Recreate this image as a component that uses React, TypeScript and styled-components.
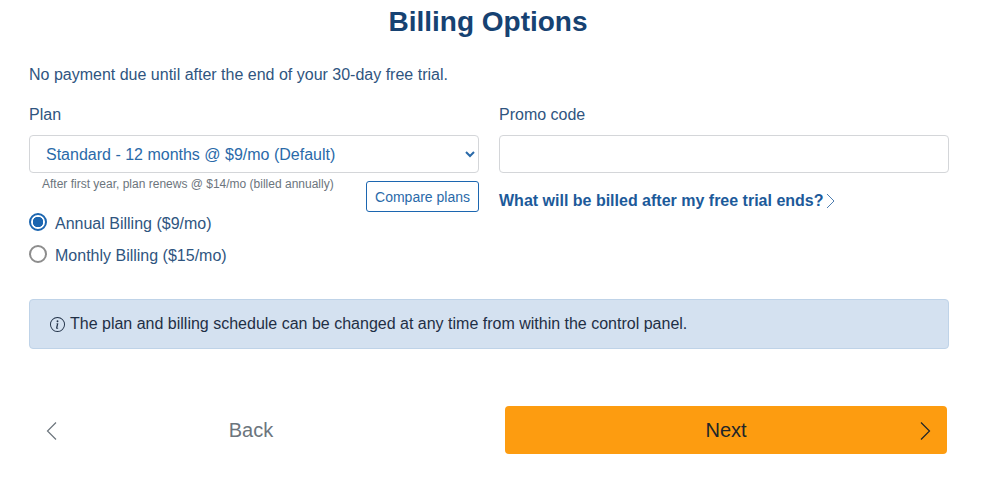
import React from 'react';
import styled, { createGlobalStyle } from 'styled-components';

const GlobalStyle = createGlobalStyle`
  html, body {
    margin: 0;
    padding: 0;
    background: #fff;
    font-family: "Liberation Sans", Arial, sans-serif;
  }
  * { box-sizing: border-box; }
`;

const Page = styled.div`
  width: 990px;
  height: 481px;
  padding: 0 41px 0 29px;
  overflow: hidden;
`;

const Title = styled.h1`
  margin: 0;
  padding: 5px 2px 0 0;
  height: 58px;
  font-size: 28px;
  line-height: 33px;
  font-weight: 700;
  text-align: center;
  color: #164272;
`;

const Intro = styled.p`
  margin: 0;
  height: 34px;
  padding-top: 7px;
  font-size: 16px;
  line-height: 20px;
  color: #2f5580;
`;

const Columns = styled.div`
  display: grid;
  grid-template-columns: 450px 450px;
  column-gap: 20px;
`;

const Column = styled.div`
  display: flex;
  flex-direction: column;
`;

const FieldLabel = styled.label`
  display: block;
  height: 43px;
  padding-top: 13px;
  font-size: 16px;
  line-height: 20px;
  color: #2f5580;
`;

const PlanSelect = styled.select`
  display: block;
  width: 100%;
  height: 38px;
  padding: 0 12px;
  font-family: inherit;
  font-size: 16px;
  color: #2a6aa9;
  background: #fff;
  border: 1px solid #d4d6d9;
  border-radius: 4px;
  outline: none;
`;

const PromoInput = styled.input`
  display: block;
  width: 100%;
  height: 38px;
  padding: 0 12px;
  font-family: inherit;
  font-size: 16px;
  background: #fff;
  border: 1px solid #d4d6d9;
  border-radius: 4px;
  outline: none;
`;

const UnderSelect = styled.div`
  display: flex;
  justify-content: space-between;
  align-items: flex-start;
`;

const PlanNotes = styled.div`
  display: flex;
  flex-direction: column;
`;

const RenewNote = styled.small`
  display: block;
  padding: 3px 0 0 13px;
  height: 35px;
  font-size: 12px;
  line-height: 16px;
  color: #6c757d;
`;

const RadioRow = styled.div`
  display: flex;
  align-items: center;
  height: 32px;
  gap: 8px;
  font-size: 16px;
  color: #2f5580;
`;

const RadioDot = styled.span<{ $checked?: boolean }>`
  width: 18px;
  height: 18px;
  margin-top: -4px;
  border-radius: 50%;
  background: ${p => (p.$checked ? 'radial-gradient(circle, #1c66b0 0 5px, #fff 5.5px)' : '#fff')};
  border: 2px solid ${p => (p.$checked ? '#1c66b0' : '#8d8d8d')};
`;

const CompareButton = styled.button`
  width: 113px;
  height: 31px;
  margin-top: 8px;
  padding: 0;
  font-family: inherit;
  font-size: 14px;
  color: #2a6aa9;
  background: #fff;
  border: 1px solid #1c66b0;
  border-radius: 3px;
`;

const BilledLink = styled.a`
  display: flex;
  align-items: center;
  gap: 2px;
  margin-top: 18px;
  height: 20px;
  font-size: 16px;
  font-weight: 700;
  color: #1c5a9a;
`;

const InfoBox = styled.div`
  display: flex;
  align-items: center;
  gap: 5px;
  width: 920px;
  height: 50px;
  margin-top: 27px;
  padding: 0 20px;
  font-size: 16px;
  color: #1f2f45;
  background: #d4e1f0;
  border: 1px solid #bfd3e8;
  border-radius: 4px;
`;

const NavRow = styled.div`
  display: flex;
  justify-content: space-between;
  width: 917px;
  margin: 57px 0 0 1px;
`;

const NavButton = styled.button<{ $primary?: boolean }>`
  position: relative;
  width: 442px;
  height: 48px;
  padding: 0;
  font-family: inherit;
  font-size: 20px;
  color: ${p => (p.$primary ? '#212529' : '#6c757d')};
  background: ${p => (p.$primary ? '#fd9c10' : '#fff')};
  border: 0;
  border-radius: 4px;
`;

const NavIcon = styled.svg<{ $side: 'left' | 'right' }>`
  position: absolute;
  top: 15px;
  ${p => (p.$side === 'left' ? 'left: 15px;' : 'right: 15px;')}
  width: 14px;
  height: 20px;
`;

const Chevron = () => (
  <svg width="9" height="16" viewBox="0 0 9 16" fill="none" stroke="#4d7db0" strokeWidth="1">
    <path d="M1 1l7 7-7 7" />
  </svg>
);

const InfoIcon = () => (
  <svg width="15" height="15" viewBox="0 0 16 16" fill="#1f2f45">
    <path d="M8 15A7 7 0 1 1 8 1a7 7 0 0 1 0 14zm0 1A8 8 0 1 0 8 0a8 8 0 0 0 0 16z" />
    <path d="M8.93 6.59l-2.29.28-.08.38.45.08c.29.07.35.18.29.47l-.74 3.46c-.19.9.1 1.32.81 1.32.55 0 1.19-.25 1.48-.6l.09-.42c-.2.18-.5.25-.69.25-.27 0-.37-.19-.3-.53l.98-4.69zM9 4.5a1 1 0 1 1-2 0 1 1 0 0 1 2 0z" />
  </svg>
);

const App: React.FC = () => {
  return (
    <Page>
      <GlobalStyle />
      <Title>Billing Options</Title>
      <Intro>No payment due until after the end of your 30-day free trial.</Intro>
      <Columns>
        <Column>
          <FieldLabel>Plan</FieldLabel>
          <PlanSelect defaultValue="standard">
            <option value="standard">Standard - 12 months @ $9/mo (Default)</option>
          </PlanSelect>
          <UnderSelect>
            <PlanNotes>
              <RenewNote>After first year, plan renews @ $14/mo (billed annually)</RenewNote>
              <RadioRow>
                <RadioDot $checked />
                Annual Billing ($9/mo)
              </RadioRow>
              <RadioRow>
                <RadioDot />
                Monthly Billing ($15/mo)
              </RadioRow>
            </PlanNotes>
            <CompareButton>Compare plans</CompareButton>
          </UnderSelect>
        </Column>
        <Column>
          <FieldLabel>Promo code</FieldLabel>
          <PromoInput />
          <BilledLink>
            What will be billed after my free trial ends?
            <Chevron />
          </BilledLink>
        </Column>
      </Columns>
      <InfoBox>
        <InfoIcon />
        The plan and billing schedule can be changed at any time from within the control panel.
      </InfoBox>
      <NavRow>
        <NavButton>
          <NavIcon $side="left" viewBox="0 0 14 20" fill="none" stroke="#6c757d" strokeWidth="1.2">
            <path d="M11 1.5L2.5 10l8.5 8.5" />
          </NavIcon>
          Back
        </NavButton>
        <NavButton $primary>
          Next
          <NavIcon $side="right" viewBox="0 0 14 20" fill="none" stroke="#212529" strokeWidth="1.2">
            <path d="M3 1.5l8.5 8.5L3 18.5" />
          </NavIcon>
        </NavButton>
      </NavRow>
    </Page>
  );
};

export default App;
